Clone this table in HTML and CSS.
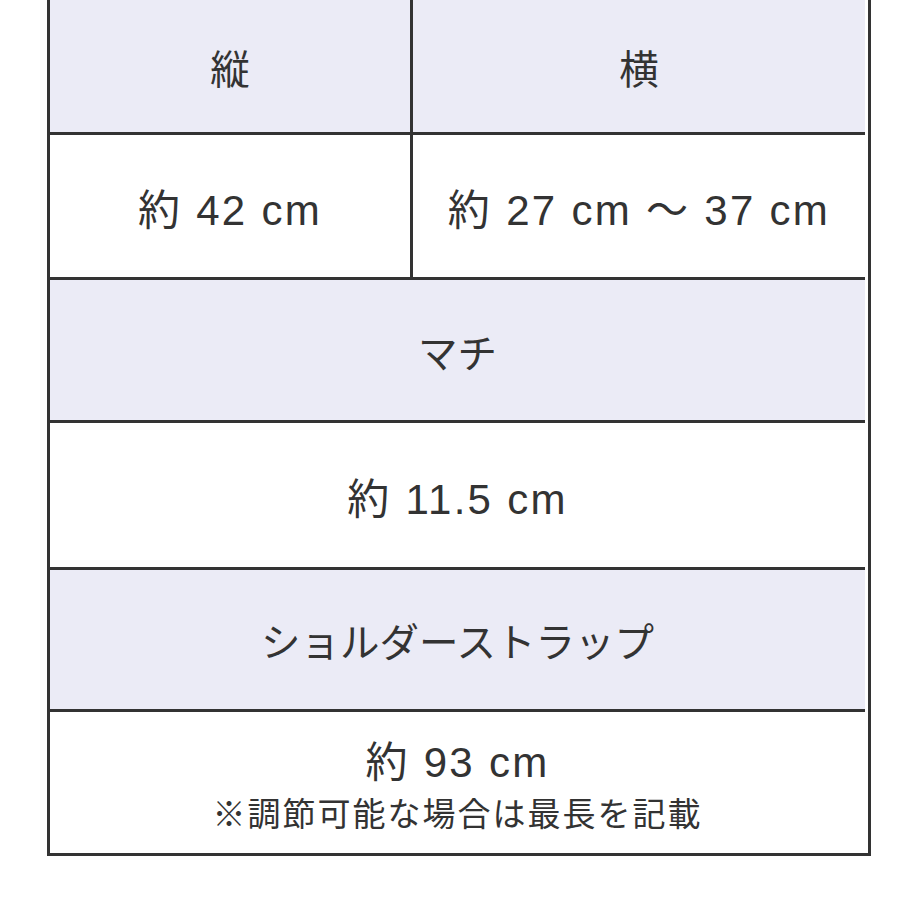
FILE: index.html
```html
<!DOCTYPE html>
<html lang="ja">
<head>
<meta charset="utf-8">
<link rel="stylesheet" href="styles.css">
</head>
<body>
<div class="table">
  <div class="cell head h0 left">縦</div>
  <div class="cell head h0">横</div>
  <div class="cell num h1 left">約 42 cm</div>
  <div class="cell num h1">約 27 cm ～ 37 cm</div>
  <div class="cell head h2 span">マチ</div>
  <div class="cell num h3 span">約 11.5 cm</div>
  <div class="cell head h4 span">ショルダーストラップ</div>
  <div class="cell num h5 span last">
    <div class="main">約 93 cm</div>
    <div class="note">※調節可能な場合は最長を記載</div>
  </div>
</div>
</body>
</html>
```
FILE: styles.css
```css
html, body {
  margin: 0;
  padding: 0;
  background: #ffffff;
}
body {
  font-family: "Liberation Sans", "Noto Sans CJK JP", sans-serif;
  color: #333333;
}
.table {
  margin: -3px 0 0 47px;
  width: 824px;
  box-sizing: border-box;
  border: 3px solid #333333;
  display: grid;
  grid-template-columns: 363px 452px;
}
.cell {
  display: flex;
  flex-direction: column;
  align-items: center;
  justify-content: center;
  font-size: 39.5px;
  letter-spacing: 0;
  border-bottom: 3px solid #333333;
  background: #ffffff;
}
.cell.num {
  font-size: 42px;
  letter-spacing: 2.3px;
}
.cell.left {
  border-right: 3px solid #333333;
}
.cell.span {
  grid-column: 1 / span 2;
}
.cell.last {
  border-bottom: none;
  box-sizing: border-box;
  padding-top: 12px;
}
.head {
  background: #ebebf6;
}
.h0 { height: 132px; }
.h1 { height: 142px; }
.h2 { height: 140px; }
.h3 { height: 144px; }
.h4 { height: 139px; }
.h5 { height: 141px; }
.main {
  line-height: 52px;
}
.note {
  font-size: 33px;
  line-height: 52px;
  letter-spacing: 2px;
}
```
